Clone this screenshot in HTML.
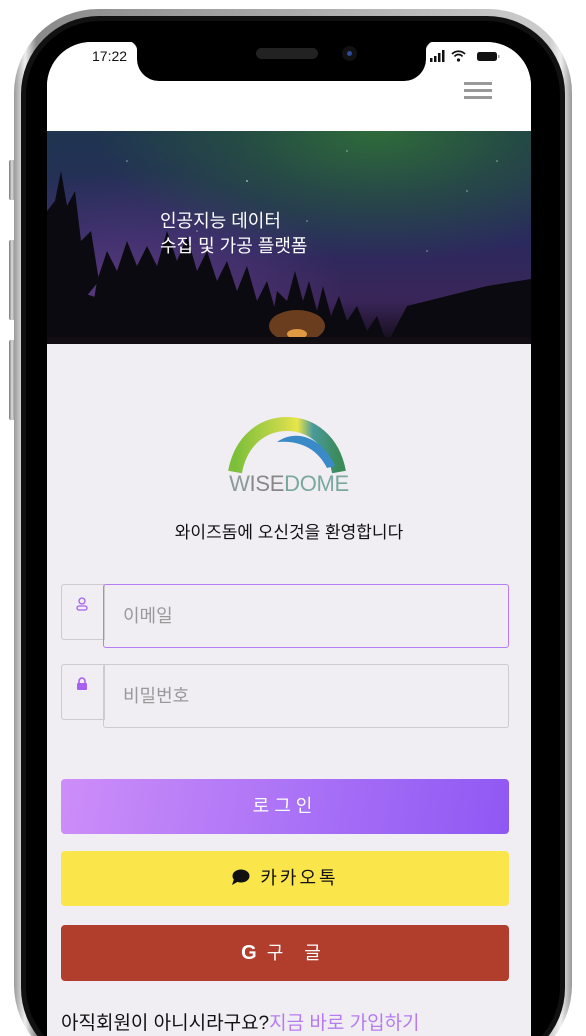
<!DOCTYPE html>
<html style="width:586px;height:1036px;overflow:hidden"><head><meta charset="utf-8"><style>
*{margin:0;padding:0;box-sizing:border-box}
body{width:586px;height:1036px;background:#fff;position:relative;overflow:hidden;font-family:"Liberation Sans","Noto Sans CJK KR",sans-serif}
.abs{position:absolute}
</style></head><body>
<div class="abs" style="left:0;top:0;width:586px;height:1036px;overflow:hidden">
<!-- side buttons -->
<div class="abs" style="left:9px;top:160px;width:6px;height:40px;background:linear-gradient(90deg,#777,#ddd,#888);border-radius:2px"></div>
<div class="abs" style="left:9px;top:240px;width:6px;height:80px;background:linear-gradient(90deg,#777,#ddd,#888);border-radius:2px"></div>
<div class="abs" style="left:9px;top:340px;width:6px;height:80px;background:linear-gradient(90deg,#777,#ddd,#888);border-radius:2px"></div>
<div class="abs" style="left:562px;top:268px;width:7px;height:125px;background:linear-gradient(90deg,#888,#ddd,#777);border-radius:2px"></div>
<!-- frame -->
<div class="abs" style="left:14px;top:9px;width:558px;height:1060px;border-radius:84px;background:linear-gradient(90deg,#9a9a9a,#eee 2%,#8a8a8a 4%,#ccc 96%,#eee 98%,#999)"></div>
<div class="abs" style="left:21px;top:16px;width:544px;height:1050px;border-radius:78px;background:#111"></div>
<div class="abs" style="left:26px;top:21px;width:534px;height:1040px;border-radius:74px;background:#000"></div>
<!-- screen -->
<div class="abs" style="left:47px;top:42px;width:484px;height:1010px;border-radius:44px 44px 0 0;background:#f0eef3;overflow:hidden">
  <div class="abs" style="left:0;top:0;width:484px;height:89px;background:#fff"></div>
  <!-- banner -->
  <div class="abs" style="left:0;top:89px;width:484px;height:213px;overflow:hidden;background:
    radial-gradient(ellipse 280px 130px at 330px 0px,#2f6b3a 0%,rgba(40,90,60,0.6) 50%,rgba(0,0,0,0) 100%),
    radial-gradient(ellipse 220px 130px at 80px 170px,#5a3a80 0%,rgba(60,40,100,0) 100%),
    linear-gradient(180deg,#1f3550 0%,#2a2a5e 50%,#3a2558 80%,#120c18 100%)">
    <svg width="484" height="213" style="position:absolute;left:0;top:0">
      <g fill="#cfe" opacity=".6">
        <circle cx="80" cy="30" r=".8"/><circle cx="200" cy="50" r="1"/><circle cx="300" cy="20" r=".8"/><circle cx="420" cy="60" r=".8"/><circle cx="380" cy="120" r=".8"/><circle cx="150" cy="100" r=".8"/><circle cx="260" cy="90" r=".8"/><circle cx="450" cy="30" r=".8"/>
      </g>
      <g fill="#0b0a10">
        <polygon points="0,80 8,70 14,40 20,75 28,60 34,110 44,100 52,150 0,213"/>
        <polygon points="40,213 50,150 60,120 70,140 80,110 90,135 100,115 110,135 120,100 130,130 140,105 150,140 160,120 170,150 180,130 190,160 200,135 210,170 220,150 230,185 240,170 255,200 270,213"/>
        <polygon points="220,213 225,190 230,160 240,170 248,140 256,170 262,150 270,180 276,155 284,185 292,165 300,190 310,175 320,200 330,185 340,213"/>
        <polygon points="340,213 360,175 400,165 440,155 484,148 484,213"/>
        <polygon points="0,213 0,150 60,170 120,213"/>
      </g>
      <ellipse cx="250" cy="195" rx="28" ry="16" fill="#b8682a" opacity=".55"/>
      <ellipse cx="250" cy="203" rx="10" ry="5" fill="#ffb04a" opacity=".8"/>
      <rect x="0" y="206" width="484" height="7" fill="#120d12"/>
    </svg>
    <div class="abs" style="left:113px;top:78px;color:#fff;font-size:18px;line-height:25px">인공지능 데이터<br>수집 및 가공 플랫폼</div>
  </div>
  <!-- logo -->
  <svg class="abs" style="left:180px;top:374px" width="120" height="62" viewBox="0 0 120 62">
    <defs>
      <linearGradient id="g1" x1="0" x2="1"><stop offset="0" stop-color="#7cbf3a"/><stop offset=".45" stop-color="#c8d84a"/><stop offset=".6" stop-color="#e8e64a"/><stop offset=".75" stop-color="#4a9a9a"/><stop offset="1" stop-color="#3a8a5a"/></linearGradient>
    </defs>
    <path d="M8 56 C14 24 36 8 60 8 C84 8 106 24 112 56" fill="none" stroke="url(#g1)" stroke-width="14"/>
    <path d="M50 26 C70 12 95 22 108 50 L100 52 C90 32 72 24 50 26 Z" fill="#3a8ac8"/>
  </svg>
  <div class="abs" style="left:0;width:484px;top:429px;text-align:center;font-size:22px;color:#8a9a98;letter-spacing:-0.3px">W<span style="color:#888">ISE</span><span style="color:#7aa8a0">DOME</span></div>
  <div class="abs" style="left:0;width:484px;top:476px;text-align:center;font-size:17px;color:#111">와이즈돔에 오신것을 환영합니다</div>
  <!-- inputs -->
  <div class="abs" style="left:14px;top:542px;width:44px;height:56px;border:1px solid #ccc;border-radius:3px 0 0 3px"></div>
  <svg class="abs" style="left:29px;top:555px" width="12" height="14" viewBox="0 0 12 14"><circle cx="6" cy="4" r="3" fill="none" stroke="#a760f0" stroke-width="1.3"/><rect x="1" y="9" width="10" height="4" rx="2" fill="none" stroke="#a760f0" stroke-width="1.3"/></svg>
  <div class="abs" style="left:56px;top:542px;width:406px;height:64px;border:1.5px solid #b67cf5;border-radius:3px;color:#999;font-size:18px;padding:17px 0 0 19px">이메일</div>
  <div class="abs" style="left:14px;top:622px;width:44px;height:56px;border:1px solid #ccc;border-radius:3px 0 0 3px"></div>
  <svg class="abs" style="left:29px;top:635px" width="12" height="14" viewBox="0 0 12 14"><path d="M3 6 V4 a3 3 0 0 1 6 0 V6" fill="none" stroke="#a760f0" stroke-width="1.6"/><rect x="1" y="6" width="10" height="7" rx="1" fill="#a760f0"/></svg>
  <div class="abs" style="left:56px;top:622px;width:406px;height:64px;border:1px solid #ccc;border-radius:3px;color:#999;font-size:18px;padding:17px 0 0 19px">비밀번호</div>
  <!-- buttons -->
  <div class="abs" style="left:14px;top:737px;width:448px;height:55px;border-radius:4px;background:linear-gradient(100deg,#cd8ef8,#a56ef6 60%,#9058f3);color:#fff;font-size:18px;text-align:center;line-height:55px;letter-spacing:5px">로그인</div>
  <div class="abs" style="left:14px;top:809px;width:448px;height:55px;border-radius:4px;background:#fae54b;color:#111;font-size:18px;text-align:center;line-height:55px;letter-spacing:3px">
    <svg width="19" height="17" viewBox="0 0 19 17" style="vertical-align:-2px;margin-right:10px"><ellipse cx="10" cy="7" rx="8.5" ry="6.5" fill="#111"/><path d="M3 10 L1 16 L8 12 Z" fill="#111"/></svg>카카오톡</div>
  <div class="abs" style="left:14px;top:883px;width:448px;height:56px;border-radius:4px;background:#b13e2c;color:#fff;font-size:18px;text-align:center;line-height:56px;letter-spacing:8px">
    <span style="font-weight:bold;font-size:20px;letter-spacing:0;margin-right:10px">G</span>구 글</div>
  <div class="abs" style="left:14px;top:966px;font-size:19px;color:#111;white-space:nowrap">아직회원이 아니시라구요?<span style="color:#b57cf2">지금 바로 가입하기</span></div>
</div>
<!-- notch -->
<div class="abs" style="left:137px;top:40px;width:289px;height:41px;background:#000;border-radius:0 0 22px 22px"></div>
<div class="abs" style="left:126px;top:40px;width:12px;height:12px;background:radial-gradient(circle at 0 100%,transparent 11px,#000 12px)"></div>
<div class="abs" style="left:425px;top:40px;width:12px;height:12px;background:radial-gradient(circle at 100% 100%,transparent 11px,#000 12px)"></div>
<div class="abs" style="left:256px;top:48px;width:62px;height:11px;border-radius:6px;background:#222"></div>
<div class="abs" style="left:342px;top:46px;width:15px;height:15px;border-radius:50%;background:#111"><div style="margin:5px;width:5px;height:5px;border-radius:50%;background:#2a4a9a"></div></div>
<!-- status -->
<div class="abs" style="left:92px;top:48px;font-size:14px;color:#111">17:22</div>
<svg class="abs" style="left:430px;top:50px" width="70" height="13" viewBox="0 0 70 13">
  <rect x="0" y="8" width="2.5" height="4" fill="#111"/><rect x="4" y="6" width="2.5" height="6" fill="#111"/><rect x="8" y="3" width="2.5" height="9" fill="#111"/><rect x="12" y="0" width="2.5" height="12" fill="#111"/>
  <path d="M22 4 a9 9 0 0 1 13 0 M24.5 6.5 a5 5 0 0 1 8 0" fill="none" stroke="#111" stroke-width="1.8"/><circle cx="28.5" cy="10" r="1.6" fill="#111"/>
  <rect x="47" y="2" width="20" height="9" rx="2.5" fill="#111"/><rect x="68" y="5" width="1.5" height="3" fill="#999"/>
</svg>
<!-- hamburger -->
<div class="abs" style="left:464px;top:82px;width:28px;height:3px;background:#999"></div>
<div class="abs" style="left:464px;top:89px;width:28px;height:3px;background:#999"></div>
<div class="abs" style="left:464px;top:96px;width:28px;height:3px;background:#999"></div>
</div>
</body></html>
